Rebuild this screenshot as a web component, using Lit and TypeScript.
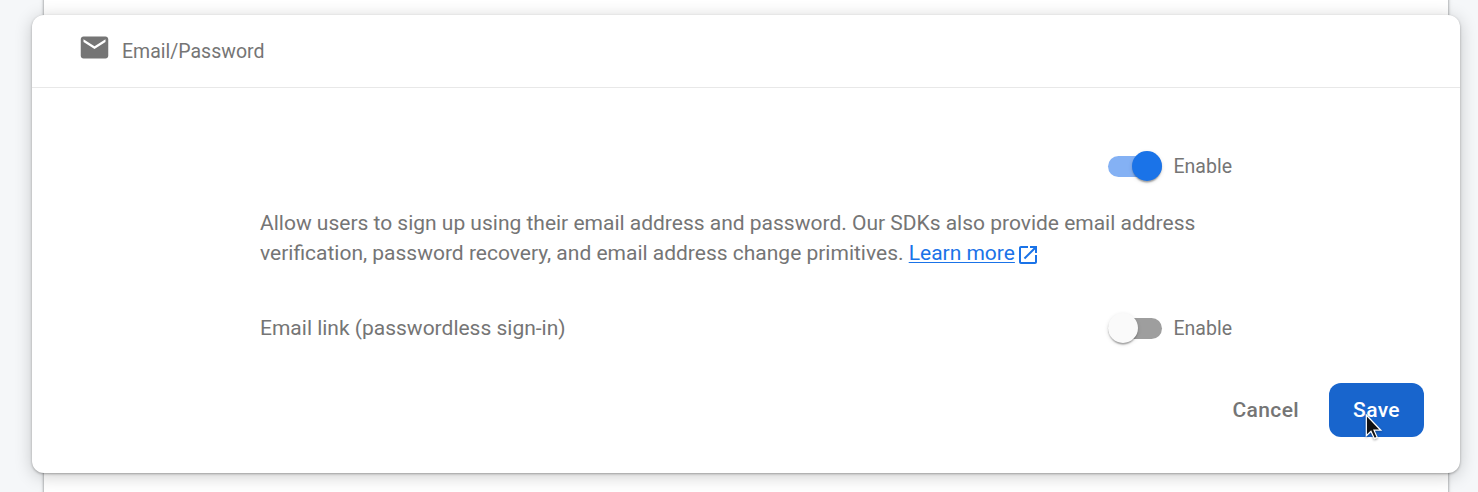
import { LitElement, html, css, svg } from "lit";
import { customElement, property } from "lit/decorators.js";

@customElement("slide-toggle")
class SlideToggle extends LitElement {
  @property({ type: Boolean }) checked = false;

  static styles = css`
    :host { display: block; }
    .row { display: flex; align-items: center; height: 36px; gap: 11.5px; }
    .track {
      display: flex; align-items: center; width: 54px; height: 21px;
      border-radius: 10.5px; background: #9e9e9e;
    }
    .track.on { justify-content: flex-end; background: #84b1f4; }
    .thumb {
      flex: none; width: 30px; height: 30px; border-radius: 50%; background: #fafafa;
      box-shadow: 0 3px 1.5px -1.5px rgba(0,0,0,.2), 0 1.5px 1.5px rgba(0,0,0,.14), 0 1.5px 4.5px rgba(0,0,0,.12);
    }
    .on .thumb { background: #1a73e8; }
    .label { font-size: 19.5px; line-height: 30px; width: 58.5px; padding-top: 1px; white-space: nowrap; }
  `;

  render() {
    return html`<div class="row">
      <div class="track ${this.checked ? "on" : ""}" role="switch" aria-checked=${this.checked}><div class="thumb"></div></div>
      <div class="label">Enable</div>
    </div>`;
  }
}

const cursor = svg`<path d="M1 1 V22.500 L5.800 18 L9.300 25.500 L12.300 24.200 L9 16.800 H16 Z" fill="#111" stroke="#fff" stroke-width="1.3" stroke-linejoin="miter"/>`;

@customElement("app-root")
class AppRoot extends LitElement {
  static styles = css`
    :host {
      display: block; height: 492px; overflow: hidden; background: #f5f7f9;
      font-family: Roboto, sans-serif; color: #757575;
    }
    * { box-sizing: border-box; }
    .page { display: grid; height: 492px; }
    .sheet {
      grid-area: 1 / 1; margin: -10px 30px -10px 43.5px; background: #fff;
      box-shadow: 0 0 2.5px rgba(0,0,0,.38), 0 1.5px 4.5px rgba(0,0,0,.16);
    }
    .card {
      grid-area: 1 / 1; margin: 15px 18px 19px 32px; border-radius: 12px; background: #fff;
      display: flex; flex-direction: column;
      box-shadow: 0 1px 2.5px rgba(0,0,0,.3), 0 3px 18px rgba(0,0,0,.2);
    }
    .header {
      display: flex; align-items: center; gap: 11px; height: 73px;
      padding: 0 46px; border-bottom: 1px solid #e8e8e8; font-size: 19.5px;
    }
    .mail { width: 33px; height: 33px; margin-bottom: 7px; display: block; fill: #757575; }
    .body { margin: 60px 228px 0; display: flex; flex-direction: column; }
    .first { display: flex; justify-content: flex-end; }
    .copy { margin: 24px 0 0; font-size: 21px; line-height: 30px; white-space: nowrap; word-spacing: -.04px; }
    .link { color: #1a73e8; text-decoration: none; }
    .link span { text-decoration: underline 1px; text-underline-offset: 2px; }
    .open { width: 24px; height: 24px; fill: #1a73e8; vertical-align: -7px; margin-left: 1.5px; }
    .second { display: flex; justify-content: space-between; align-items: center; margin-top: 42px; font-size: 21px; word-spacing: -.04px; }
    .actions { display: flex; justify-content: flex-end; padding: 0 36px; margin-top: 37px; gap: 6px; }
    .btn {
      height: 54px; padding: 0 24px; border: 0; border-radius: 12px; background: none; color: inherit;
      font: 500 21px/54px Roboto, sans-serif; letter-spacing: .38px;
    }
    .save { width: 95px; background: #1865cd; color: #fff; position: relative; }
    .cursor { position: absolute; left: 36px; top: 30.5px; width: 20px; height: 27px; filter: drop-shadow(0 1px 1px rgba(0,0,0,.35)); }
  `;

  render() {
    return html`<div class="page">
      <div class="sheet"></div>
      <section class="card">
        <header class="header">
          <svg class="mail" viewBox="0 0 24 24"><path d="M20 4H4c-1.100 0-1.990.9-1.990 2L2 18c0 1.100.9 2 2 2h16c1.100 0 2-.9 2-2V6c0-1.100-.9-2-2-2zm0 4l-8 5-8-5V6l8 5 8-5v2z"/></svg>
          <span>Email/Password</span>
        </header>
        <div class="body">
          <div class="first"><slide-toggle checked></slide-toggle></div>
          <p class="copy">Allow users to sign up using their email address and password. Our SDKs also provide email address<br>verification, password recovery, and email address change primitives. <a class="link"><span>Learn more</span><svg class="open" viewBox="0 0 24 24"><path d="M19 19H5V5h7V3H5c-1.110 0-2 .9-2 2v14c0 1.100.89 2 2 2h14c1.100 0 2-.9 2-2v-7h-2v7zM14 3v2h3.590l-9.830 9.830 1.410 1.410L19 6.410V10h2V3h-7z"/></svg></a></p>
          <div class="second"><span>Email link (passwordless sign-in)</span><slide-toggle></slide-toggle></div>
        </div>
        <div class="actions">
          <button class="btn">Cancel</button>
          <button class="btn save">Save<svg class="cursor" viewBox="0 0 20 28">${cursor}</svg></button>
        </div>
      </section>
    </div>`;
  }
}
